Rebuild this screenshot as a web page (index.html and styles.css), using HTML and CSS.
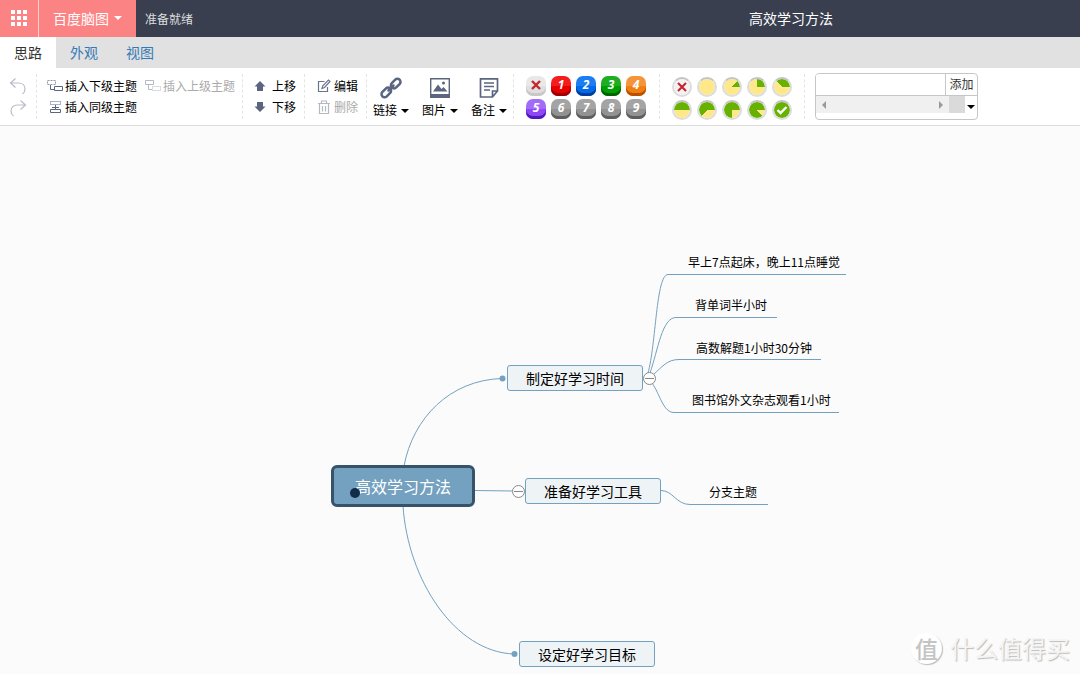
FILE: index.html
```html
<!DOCTYPE html>
<html lang="zh-CN">
<head>
<meta charset="utf-8">
<meta name="viewport" content="width=device-width, initial-scale=1">
<title>高效学习方法 - 百度脑图</title>
<link rel="stylesheet" href="styles.css">
</head>
<body>
<header class="topbar">
  <button class="apps" type="button" aria-label="应用">
    <svg width="16" height="16" viewBox="0 0 16 16" fill="#fff"><path d="M0 0h4v4H0zM6 0h4v4H6zM12 0h4v4h-4zM0 6h4v4H0zM6 6h4v4H6zM12 6h4v4h-4zM0 12h4v4H0zM6 12h4v4H6zM12 12h4v4h-4z"/></svg>
  </button>
  <button class="brand" type="button">百度脑图<span class="caret"></span></button>
  <span class="status">准备就绪</span>
  <h1 class="doc-title">高效学习方法</h1>
</header>

<nav class="tabs">
  <a class="tab active" href="#idea">思路</a>
  <a class="tab" href="#look">外观</a>
  <a class="tab" href="#view">视图</a>
</nav>

<div class="toolbar">
  <div class="group history">
    <button type="button" aria-label="撤销"><svg width="18" height="18" viewBox="0 0 18 18" fill="none" stroke="#b9bdc9" stroke-width="1.200"><path d="M6.500 1.500 1.500 6l5 4.500M1.500 6h8c4 0 6.500 2.500 6.500 6 0 2-1 4-2.500 5"/></svg></button>
    <button type="button" aria-label="重做"><svg width="18" height="18" viewBox="0 0 18 18" fill="none" stroke="#b9bdc9" stroke-width="1.200"><path d="M11.500 1.500l5 4.500-5 4.500M16.500 6h-8C4.500 6 2 8.500 2 12c0 2 1 4 2.500 5"/></svg></button>
  </div>
  <div class="group insert">
    <button class="cmd" type="button"><svg width="16" height="16" viewBox="0 0 16 16" fill="none" stroke="#5b6580"><path d="M.5 2.500h8v4h-8z" stroke="#8d95a8" stroke-dasharray="2 1"/><path d="M3.500 7v4.500H7M7.500 8.500h8v4h-8z"/></svg>插入下级主题</button>
    <button class="cmd" type="button" disabled><svg width="16" height="16" viewBox="0 0 16 16" fill="none" stroke="#b4b8c2"><path d="M.5 2.500h8v4h-8zM3.500 7v4.500H7"/><path d="M7.500 8.500h8v4h-8z" stroke-dasharray="1 1"/></svg>插入上级主题</button>
    <button class="cmd" type="button"><svg width="16" height="16" viewBox="0 0 16 16" fill="none" stroke="#5b6580"><path d="M3.500 2.500h10v3h-10z" stroke-dasharray="1 1"/><path d="M8.500 6v4M5 8.500h7M3.500 10.500h10v3h-10z"/></svg>插入同级主题</button>
  </div>
  <div class="group move">
    <button class="cmd" type="button"><svg width="12" height="12" viewBox="0 0 12 12" fill="#5b6580"><path d="M6 1l5.500 5.500H9V11H3V6.500H.5z"/></svg>上移</button>
    <button class="cmd" type="button"><svg width="12" height="12" viewBox="0 0 12 12" fill="#5b6580"><path d="M6 11L.5 5.500H3V1h6v4.500h2.500z"/></svg>下移</button>
  </div>
  <div class="group edit">
    <button class="cmd" type="button"><svg width="14" height="14" viewBox="0 0 14 14" fill="none" stroke="#6b748a" stroke-width="1.200"><path d="M7.500 2.500h-6v10h9V8"/><path d="M5 9.500l.8-2.700L11.500 1 13 2.500 7.500 8.500z"/></svg>编辑</button>
    <button class="cmd" type="button" disabled><svg width="14" height="14" viewBox="0 0 14 14" fill="none" stroke="#b4b8c2" stroke-width="1.200"><path d="M1 3.500h12M4.500 3V1h5v2M2.500 4v9.500h9V4M5.500 6v5.500M8.500 6v5.500"/></svg>删除</button>
  </div>
  <div class="group media">
    <button class="big" type="button"><svg width="22" height="22" viewBox="0 0 22 22" fill="none" stroke="#5b6580" stroke-width="2.500" stroke-linecap="round"><rect x="10.200" y="3.500" width="11" height="6.200" rx="3.100" transform="rotate(-45 15.700 6.600)"/><rect x=".8" y="12.300" width="11" height="6.200" rx="3.100" transform="rotate(-45 6.300 15.400)"/><path d="M8.500 13.500l5-5"/></svg><span>链接<i class="caret"></i></span></button>
    <button class="big" type="button"><svg width="22" height="22" viewBox="0 0 22 22"><path fill="none" stroke="#5b6580" stroke-width="1.400" d="M1.700 1.700h18.600v18.600H1.700z"/><path fill="#5b6580" d="M2 17h18v3.500H2zM4 14.500l5-7 3.500 4.500 2-2 4 4.500z"/><circle cx="14.500" cy="6" r="1.500" fill="#5b6580"/></svg><span>图片<i class="caret"></i></span></button>
    <button class="big" type="button"><svg width="22" height="22" viewBox="0 0 22 22" fill="none" stroke="#5b6580" stroke-width="1.700"><path d="M2.500 1.800h17V14l-5 6h-12zM14.500 20v-6h5M6 6h10M6 9.500h10M6 13h6"/></svg><span>备注<i class="caret"></i></span></button>
  </div>
  <div class="group grid priority">
    <button class="pri none" type="button" aria-label="移除优先级"><svg width="12" height="12" viewBox="0 0 12 12" stroke="#c1272d" stroke-width="2.400"><path d="M2 2l8 8M10 2l-8 8"/></svg></button>
    <button class="pri red" type="button">1</button>
    <button class="pri blue" type="button">2</button>
    <button class="pri green" type="button">3</button>
    <button class="pri orange" type="button">4</button>
    <button class="pri purple" type="button">5</button>
    <button class="pri" type="button">6</button>
    <button class="pri" type="button">7</button>
    <button class="pri" type="button">8</button>
    <button class="pri" type="button">9</button>
  </div>
  <div class="group grid progress">
    <button class="pie clear" type="button" aria-label="移除进度"><svg width="12" height="12" viewBox="0 0 12 12" stroke="#c8202c" stroke-width="2"><path d="M2 2l8 8M10 2l-8 8"/></svg></button>
    <button class="pie p0" type="button" aria-label="未开始"></button>
    <button class="pie p1" type="button" aria-label="完成 1/8"></button>
    <button class="pie p2" type="button" aria-label="完成 1/4"></button>
    <button class="pie p3" type="button" aria-label="完成 3/8"></button>
    <button class="pie p4" type="button" aria-label="完成一半"></button>
    <button class="pie p5" type="button" aria-label="完成 5/8"></button>
    <button class="pie p6" type="button" aria-label="完成 3/4"></button>
    <button class="pie p7" type="button" aria-label="完成 7/8"></button>
    <button class="pie done" type="button" aria-label="已完成"><svg width="12" height="12" viewBox="0 0 12 12" fill="none" stroke="#fff" stroke-width="2.400"><path d="M1.500 6l3 3 6-6"/></svg></button>
  </div>
  <div class="group resource">
    <div class="resource-box">
      <div class="resource-add">
        <input type="text" aria-label="标签">
        <button type="button">添加</button>
      </div>
      <div class="resource-list">
        <div class="scroll"><span class="arrow left"></span><span class="arrow right"></span></div>
        <span class="corner"></span>
        <button type="button" aria-label="展开"><span class="caret"></span></button>
      </div>
    </div>
  </div>
</div>

<main class="canvas">
  <svg class="links" width="1080" height="548" viewBox="0 126 1080 548" fill="none" stroke="#73a1bf">
    <path d="M404 466C413 418 450 380 502 378.500"/>
    <path d="M474 490.500L513 491"/>
    <path d="M403 506C408 580 455 652 514 654"/>
    <circle cx="502.500" cy="378.500" r="3" fill="#73a1bf" stroke="none"/>
    <circle cx="514.500" cy="654" r="3" fill="#73a1bf" stroke="none"/>
    <path d="M648 373C656 345 656 274.500 668 274.500H846"/>
    <path d="M650 373C658 350 662 317.500 676 317.500H777"/>
    <path d="M653 375C662 367 667 359.500 679 359.500H821"/>
    <path d="M652 383C660 394 663 412.500 674 412.500H839"/>
    <path d="M661 490.500C673 490.500 676 504.500 690 504.500H768"/>
  </svg>
  <div class="node root">高效学习方法</div>
  <div class="node main time">制定好学习时间</div>
  <div class="node main tools">准备好学习工具</div>
  <div class="node main goal">设定好学习目标</div>
  <div class="node leaf wake">早上7点起床，晚上11点睡觉</div>
  <div class="node leaf words">背单词半小时</div>
  <div class="node leaf maths">高数解题1小时30分钟</div>
  <div class="node leaf library">图书馆外文杂志观看1小时</div>
  <div class="node leaf branch">分支主题</div>
  <button class="fold fold-time" type="button" aria-label="收起"></button>
  <button class="fold fold-tools" type="button" aria-label="收起"></button>
  <span class="pointer"></span>
  <div class="watermark"><span class="seal">值</span>什么值得买</div>
</main>
</body>
</html>
```
FILE: styles.css
```css
* {
  box-sizing: border-box;
}

body {
  margin: 0;
  min-height: 100vh;
  display: flex;
  flex-direction: column;
  background: #fbfbfb;
  color: #000;
  font-family: "Noto Sans CJK SC", sans-serif;
  font-size: 12px;
  line-height: 18px;
}

button {
  margin: 0;
  padding: 0;
  border: 0;
  background: none;
  color: inherit;
  font: inherit;
  cursor: pointer;
}

svg {
  display: block;
  flex: none;
}

.caret {
  display: inline-block;
  border: 4px solid transparent;
  border-top-color: currentColor;
  border-bottom: 0;
}

/* Header */

.topbar {
  display: flex;
  align-items: center;
  height: 37px;
  background: #393f4f;
  color: #fff;
}

.apps,
.brand {
  display: flex;
  align-items: center;
  justify-content: center;
  height: 100%;
  padding-bottom: 2px;
  background: #fc8383;
}

.apps {
  width: 39px;
  border-right: 1px solid #fed0d0;
}

.brand {
  gap: 5px;
  padding: 0 14px 2px;
  font-size: 14px;
}

.status {
  margin-left: 9px;
  color: #ddd;
}

.doc-title {
  margin: 0 247px 0 auto;
  padding-bottom: 2px;
  font-size: 14px;
  font-weight: 400;
}

/* Tabs */

.tabs {
  display: flex;
  height: 31px;
  background: #e1e1e1;
}

.tab {
  padding: 0 14px;
  color: #337ab7;
  font-size: 14px;
  line-height: 30px;
  text-decoration: none;
}

.tab.active {
  background: #fff;
  color: #333;
}

/* Toolbar */

.toolbar {
  display: flex;
  align-items: stretch;
  height: 58px;
  padding: 6px 0;
  background: #fff;
  border-bottom: 1px solid #ddd;
}

.group {
  flex: none;
  border-right: 1px dashed #e4e4e4;
}

.group:last-child {
  border-right: 0;
}

.history {
  display: flex;
  flex-direction: column;
  gap: 4px;
  width: 37px;
  padding: 3px 9px;
}

.insert {
  display: grid;
  grid-template-columns: auto auto;
  align-content: start;
  column-gap: 8px;
  row-gap: 3px;
  width: 206px;
  padding: 3px 10px;
}

.cmd {
  display: flex;
  align-items: center;
  gap: 2px;
  height: 18px;
  white-space: nowrap;
}

.cmd:disabled {
  color: #aaa;
}

.move,
.edit {
  display: flex;
  flex-direction: column;
  gap: 3px;
  width: 62px;
  padding: 3px 0 3px 11px;
}

.move .cmd {
  gap: 6px;
}

.edit .cmd {
  gap: 3px;
}

.edit {
  padding-left: 12px;
}

.media {
  display: flex;
  gap: 13px;
  width: 147px;
  padding: 3px 0 0 6px;
}

.big {
  display: flex;
  flex-direction: column;
  align-items: center;
  gap: 2px;
  white-space: nowrap;
}

.big .caret {
  margin-left: 4px;
  vertical-align: 2px;
}

.grid {
  display: grid;
  grid-template-columns: repeat(5, 20px);
  grid-auto-rows: 20px;
  align-content: start;
  gap: 3px 5px;
  width: 146px;
  padding: 2px 0 0 12px;
}

.pri,
.pie {
  display: flex;
  align-items: center;
  justify-content: center;
}

.pri {
  --face: #929292;
  --shine: #a4a4a4;
  --edge: #5e5e5e;
  border-radius: 7px;
  background: linear-gradient(var(--shine) 50%, var(--face) 50%);
  box-shadow: inset 0 -3px var(--edge);
  color: #fff;
  font-family: "Open Sans", "Noto Sans", sans-serif;
  font-size: 12px;
  font-style: italic;
  font-weight: 700;
  line-height: 16px;
  padding-bottom: 2px;
}

.pri.none {
  --face: #dfdfdf;
  --shine: #e8e8e8;
  --edge: #c8c8c8;
}

.pri.red {
  --face: #e60000;
  --shine: #f41c1c;
  --edge: #9c0000;
}

.pri.blue {
  --face: #006be6;
  --shine: #1c7df2;
  --edge: #003d9c;
}

.pri.green {
  --face: #00a000;
  --shine: #1fae1f;
  --edge: #006300;
}

.pri.orange {
  --face: #f17f10;
  --shine: #f4953a;
  --edge: #b85000;
}

.pri.purple {
  --face: #8f47f5;
  --shine: #a36cf8;
  --edge: #4f18bd;
}

.progress {
  width: 145px;
  padding-top: 3px;
}

.pie {
  --rest: #ffe88a;
  --fill: 0deg;
  border: 2px solid #dcdcdc;
  border-top-color: #c4c4c4;
  border-radius: 50%;
  background: conic-gradient(from 90deg, var(--rest) calc(360deg - var(--fill)), #67b200 0) padding-box;
}

.pie.clear {
  --rest: #f2f2f2;
}

.pie.p1 {
  --fill: 45deg;
}

.pie.p2 {
  --fill: 90deg;
}

.pie.p3 {
  --fill: 135deg;
}

.pie.p4 {
  --fill: 180deg;
}

.pie.p5 {
  --fill: 225deg;
}

.pie.p6 {
  --fill: 270deg;
}

.pie.p7 {
  --fill: 315deg;
}

.pie.done {
  --fill: 360deg;
}

.resource {
  padding-left: 10px;
}

.resource-box {
  width: 163px;
  height: 47px;
  margin-top: -1px;
  border: 1px solid #c6c6c6;
  border-radius: 4px;
  overflow: hidden;
}

.resource-add {
  display: flex;
  height: 22px;
  border-bottom: 1px solid #c6c6c6;
}

.resource-add input {
  flex: 1;
  min-width: 0;
  padding: 0 4px;
  border: 0;
  outline: 0;
  font: inherit;
}

.resource-add button {
  width: 32px;
  padding-bottom: 2px;
  border-left: 1px solid #c6c6c6;
  color: #333;
}

.resource-list {
  display: flex;
  height: 17px;
}

.scroll {
  flex: 1;
  display: flex;
  align-items: center;
  justify-content: space-between;
  padding: 0 6px;
  background: #f0f0f0;
}

.arrow {
  border: 4px solid transparent;
}

.arrow.left {
  border-left: 0;
  border-right-color: #999;
}

.arrow.right {
  border-right: 0;
  border-left-color: #999;
}

.corner {
  width: 16px;
  background: #dadada;
}

.resource-list button {
  width: 12px;
  line-height: 17px;
}

.resource-list .caret {
  vertical-align: 1px;
}

/* Mind map */

.canvas {
  position: relative;
  flex: 1;
  min-height: 548px;
  overflow: hidden;
}

.links {
  position: absolute;
  left: 0;
  top: 0;
}

.node {
  position: absolute;
  text-align: center;
  white-space: nowrap;
}

.root {
  left: 331px;
  top: 339px;
  padding: 6px 21px;
  border: 3px solid #37536a;
  border-radius: 6px;
  background: #73a1bf;
  color: #fff;
  font-size: 16px;
  line-height: 24px;
}

.main {
  padding: 3px 18px;
  border: 1px solid #73a1bf;
  border-radius: 3px;
  background: #eef3f6;
  font-size: 14px;
}

.time {
  left: 507px;
  top: 239px;
}

.tools {
  left: 525px;
  top: 352px;
}

.goal {
  left: 519px;
  top: 515px;
}

.wake {
  left: 688px;
  top: 127px;
}

.words {
  left: 695px;
  top: 170px;
}

.maths {
  left: 696px;
  top: 213px;
}

.library {
  left: 692px;
  top: 265px;
}

.branch {
  left: 709px;
  top: 357px;
}

.fold {
  position: absolute;
  width: 13px;
  height: 13px;
  border: 1px solid #888;
  border-radius: 50%;
  background: linear-gradient(#888, #888) center / 9px 1px no-repeat #fff;
}

.fold-time {
  left: 643px;
  top: 246px;
}

.fold-tools {
  left: 512px;
  top: 359px;
}

.pointer {
  position: absolute;
  left: 350px;
  top: 362px;
  width: 10px;
  height: 10px;
  border-radius: 50%;
  background: #122d49;
}

.watermark {
  position: absolute;
  right: 10px;
  bottom: 8px;
  display: flex;
  align-items: center;
  gap: 8px;
  color: #f4f4f4;
  font-size: 24px;
  line-height: 36px;
  text-shadow: 1px 1px 1px #bbb;
}

.seal {
  width: 31px;
  height: 31px;
  border-radius: 50%;
  background: #fff;
  box-shadow: 1px 1px 1px #bbb;
  color: #c4c4c4;
  font-size: 23px;
  font-weight: 500;
  line-height: 30px;
  text-align: center;
  text-shadow: none;
}
```
